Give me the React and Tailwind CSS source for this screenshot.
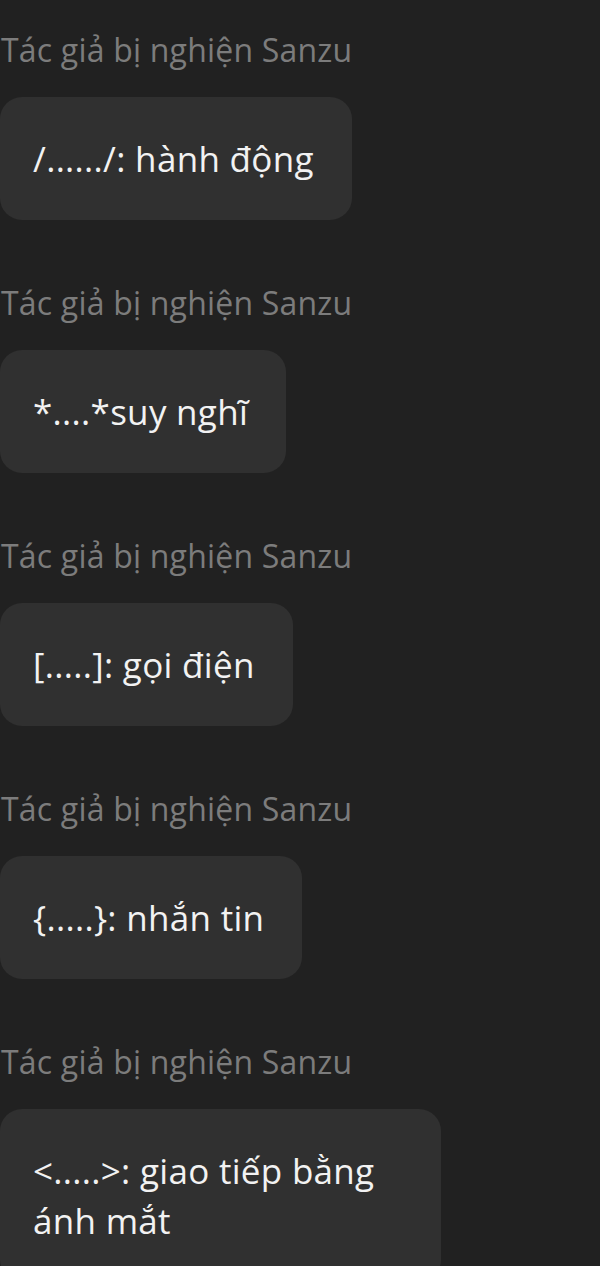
import React from "react";

const messages = [
  "/....../: hành động",
  "*....*suy nghĩ",
  "[.....]: gọi điện",
  "{.....}: nhắn tin",
  "<.....>: giao tiếp bằng ánh mắt",
];

function Message({ text }) {
  return (
    <div className="flex flex-col items-start">
      <div className="pl-[1px] text-[32px] leading-[40px] tracking-[0.2px] text-[#7c7c7c]">Tác giả bị nghiện Sanzu</div>
      <div className="mt-[27px] max-w-[441px] rounded-[22px] bg-[#303030] pl-[33px] pr-[38px] pt-[37px] pb-[36px] text-[35px] leading-[50px] tracking-[0.3px] text-[#f2f2f2]">
        {text}
      </div>
    </div>
  );
}

export default function App() {
  return (
    <div
      className="min-h-[1266px] overflow-hidden bg-[#212121] pt-[30px]"
      style={{ fontFamily: "'Open Sans', 'Noto Sans', sans-serif" }}
    >
      <div className="flex flex-col gap-[63px]">
        {messages.map((m, i) => (
          <Message key={i} text={m} />
        ))}
      </div>
    </div>
  );
}
